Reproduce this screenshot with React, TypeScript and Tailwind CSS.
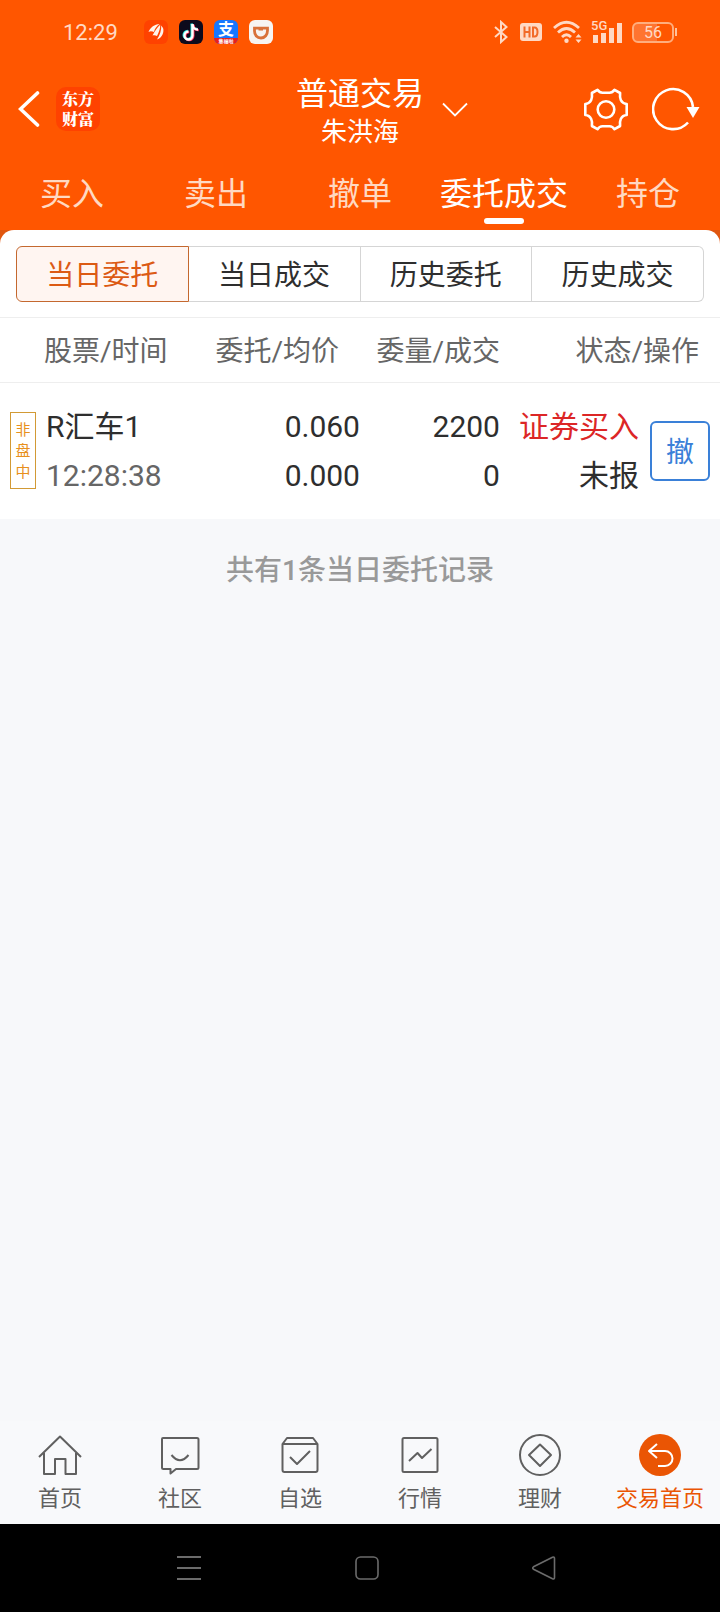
import clsx from "clsx";
import type { ReactNode } from "react";

interface Order {
    tag: string;
    name: string;
    time: string;
    price: string;
    avgPrice: string;
    amount: string;
    dealt: string;
    side: string;
    status: string;
}

const tabs = ["买入", "卖出", "撤单", "委托成交", "持仓"];
const segments = ["当日委托", "当日成交", "历史委托", "历史成交"];

const orders: Order[] = [
    {
        tag: "非盘中",
        name: "R汇车1",
        time: "12:28:38",
        price: "0.060",
        avgPrice: "0.000",
        amount: "2200",
        dealt: "0",
        side: "证券买入",
        status: "未报",
    },
];

const StatusBar = () => (
    <div className="flex h-16 items-center justify-between pl-[63px] pr-[43px] text-[#ffd9c4]">
        <div className="flex items-center">
            <span className="w-[81px] pt-[2px] text-[22px] leading-8">12:29</span>
            <div className="flex gap-[11px]">
                <svg width="24" height="24" viewBox="0 0 24 24">
                    <rect width="24" height="24" rx="6" fill="#ff4200" />
                    <g fill="#fff4ec">
                        <path d="M15.500 4C10.500 4.500 6.500 7 4.500 12C6.500 10.800 8.500 11.500 10 12C10.500 9 12.500 6 15.500 4Z" />
                        <path d="M16.200 4.800C13 7.500 11 11 8.500 15.500C10.500 15 12 15.500 13 16C15 12 16.500 8 16.200 4.800Z" />
                        <path d="M17.200 5.500C17.500 10.500 16 14.500 13 19.500C18 18 20.500 12 19 8Z" />
                    </g>
                </svg>
                <svg width="24" height="24" viewBox="0 0 24 24" fill="none" strokeWidth="2.400">
                    <rect width="24" height="24" rx="6" fill="#0d0a1c" />
                    <g stroke="#25e8e0" transform="translate(-0.800 -0.600)">
                        <path d="M13.500 4V15.500A4 4 0 1 1 9.500 11.500" />
                        <path d="M13.500 4.500C13.800 7.500 16 9.500 19 9.500" />
                    </g>
                    <g stroke="#fe2c55" transform="translate(0.800 0.600)">
                        <path d="M13.500 4V15.500A4 4 0 1 1 9.500 11.500" />
                        <path d="M13.500 4.500C13.800 7.500 16 9.500 19 9.500" />
                    </g>
                    <g stroke="#fff">
                        <path d="M13.500 4V15.500A4 4 0 1 1 9.500 11.500" />
                        <path d="M13.500 4.500C13.800 7.500 16 9.500 19 9.500" />
                    </g>
                </svg>
                <div className="relative h-6 w-6 overflow-hidden rounded-md bg-[#1677ff] text-center text-[16px] leading-5 font-bold text-white">
                    支
                    <div className="absolute inset-x-0 bottom-0 h-[6px] bg-[#e8201c] text-[5px] leading-[6px]">集福啦</div>
                </div>
                <svg width="24" height="24" viewBox="0 0 24 24" fill="none">
                    <rect width="24" height="24" rx="6" fill="#f7f4f2" />
                    <path d="M5.500 8.200H18.500V10.500C18.500 14.500 16 18 12 18S5.500 15 5.500 11Z" stroke="#d9713a" strokeWidth="2.800" />
                    <path d="M9.500 9.500H14" stroke="#d9713a" strokeWidth="2" />
                </svg>
            </div>
        </div>
        <div className="flex items-center">
            <svg width="14" height="24" viewBox="0 0 14 24" fill="none" stroke="currentColor" strokeWidth="2">
                <path d="M1 7L12.500 17L7 22V2L12.500 7L1 17" />
            </svg>
            <svg className="ml-3" width="22" height="20" viewBox="0 0 22 20">
                <rect y="1" width="22" height="18" rx="3" fill="currentColor" />
                <path d="M4.500 4.500V15.500M9.500 4.500V15.500M4.500 10H9.500M13 5.500V14.500H14.500Q17.500 14.500 17.500 10T14.500 5.500Z" fill="none" stroke="#f26a28" strokeWidth="2" />
            </svg>
            <svg className="ml-[11px]" width="29" height="24" viewBox="0 0 29 24" fill="none" stroke="currentColor" strokeWidth="2.800">
                <path d="M1 8Q13.500 -3.500 26 8M5 12.500Q13.500 4.500 22 12.500M9 17Q13.500 12.500 18 17" />
                <circle cx="13.500" cy="20.800" r="2.200" fill="currentColor" stroke="none" />
                <path d="M22.500 17.500L25.500 14L28.500 17.500ZM22.500 19.500H28.500L25.500 23Z" fill="currentColor" stroke="none" />
            </svg>
            <div className="relative ml-[9px] h-6 w-[31px]">
                <span className="absolute -top-1 left-0 text-[13px] leading-5 font-medium">5G</span>
                <svg width="31" height="24" viewBox="0 0 31 24" fill="currentColor">
                    <rect x="2" y="15" width="5" height="8" />
                    <rect x="10" y="13" width="5" height="10" />
                    <rect x="18" y="8" width="5" height="15" />
                    <rect x="26" y="3" width="5" height="20" />
                </svg>
            </div>
            <div className="ml-[10px] flex items-center">
                <div className="h-[21px] w-[42px] rounded-md border-2 border-[#ffae7e] bg-linear-to-r from-[#ff7430] from-60% to-[#ff5600] to-60% text-center text-[16px] leading-[18px]">
                    56
                </div>
                <div className="ml-px h-2 w-0.5 bg-[#ffc09a]" />
            </div>
        </div>
    </div>
);

const TitleBar = () => (
    <div className="grid h-24 grid-cols-[1fr_auto_1fr] items-center">
        <div className="flex items-center pb-[6px] pl-[18px]">
            <button aria-label="返回">
                <svg width="22" height="36" viewBox="0 0 22 36" fill="none" stroke="#fff" strokeWidth="3.600" strokeLinecap="round">
                    <path d="M19.500 2L2.500 18L19.500 34" />
                </svg>
            </button>
            <a href="#" className="ml-4 block w-11 rounded-[10px] bg-[#ff4200] py-[2px] text-center font-['Noto_Serif_CJK_SC','Noto_Sans_CJK_SC',serif] text-[16px] leading-5 font-black text-white">
                东方
                <br />
                财富
            </a>
        </div>
        <button className="relative text-center text-white">
            <span className="block text-[32px] leading-10">普通交易</span>
            <span className="block text-[26px] leading-9">朱洪海</span>
            <svg className="absolute top-7 -right-11" width="26" height="16" viewBox="0 0 26 16" fill="none" stroke="#fff" strokeWidth="1.800">
                <path d="M1 1.500L13 13.500L25 1.500" />
            </svg>
        </button>
        <div className="flex items-center justify-end gap-6 pr-5 pb-[6px]">
            <button aria-label="设置">
                <svg width="44" height="43" viewBox="0 0 44 43" fill="none" stroke="#fff" strokeWidth="2.600" strokeLinejoin="round">
                    <path d="M7.900 5L13.500 1.800Q15.500 4.800 18.500 4.800H25.500Q28.500 4.800 30.500 1.800L36.100 5C35.800 8 35.800 10 36.800 12C38 14.500 40 15.800 42.700 16V27C40 27.200 38 28.500 36.800 31C35.800 33 35.800 35 36.100 38L30.500 41.200Q28.500 38.200 25.500 38.200H18.500Q15.500 38.200 13.500 41.200L7.900 38C8.200 35 8.200 33 7.200 31C6 28.500 4 27.200 1.300 27V16C4 15.800 6 14.500 7.200 12C8.200 10 8.200 8 7.900 5Z" />
                    <circle cx="22" cy="21.500" r="8.300" />
                </svg>
            </button>
            <button aria-label="刷新">
                <svg width="48" height="44" viewBox="0 0 48 44" fill="none">
                    <path d="M36 35.500A20 20 0 1 1 41 20" stroke="#fff" strokeWidth="2.600" />
                    <path d="M34.500 20H47.500L41 31Z" fill="#fff" />
                </svg>
            </button>
        </div>
    </div>
);

const Segments = () => (
    <div className="flex px-4 pt-4 pb-[15px]">
        {segments.map((label, i) => (
            <button
                key={label}
                className={clsx(
                    "h-14 flex-1 border pt-1 text-[28px] leading-10 first:rounded-l-md last:rounded-r-md",
                    i === 0 ? "border-[#c4682f] bg-[#fff5f1] text-[#dc5a14]" : "border-l-0 border-[#d5d5d5] text-[#2e2e2e]",
                )}
            >
                {label}
            </button>
        ))}
    </div>
);

const OrderTable = () => (
    <table className="w-full table-fixed text-right">
        <thead className="border-y border-[#eeeeee] text-[28px] leading-10 text-[#666666]">
            <tr className="h-[65px]">
                <th className="w-5/18 pt-1 pl-11 text-left font-normal">股票/时间</th>
                <th className="w-2/9 pt-1 pr-[21px] font-normal">委托/均价</th>
                <th className="w-7/36 pt-1 font-normal">委量/成交</th>
                <th className="pt-1 pr-[21px] font-normal">状态/操作</th>
            </tr>
        </thead>
        <tbody className="text-[30px] leading-[49px] text-[#2e2e2e]">
            {orders.map((order) => (
                <tr key={order.time} className="h-[136px]">
                    <td className="text-left">
                        <div className="flex items-center pl-[10px]">
                            <span className="mr-[10px] w-[26px] border border-[#d29a35] px-1 pt-[7px] pb-[5px] text-center text-[15px] leading-[21px] break-all text-[#e8901c]">
                                {order.tag}
                            </span>
                            <div>
                                <div>{order.name}</div>
                                <div className="text-[#666666]">{order.time}</div>
                            </div>
                        </div>
                    </td>
                    <td>
                        <div>{order.price}</div>
                        <div>{order.avgPrice}</div>
                    </td>
                    <td>
                        <div>{order.amount}</div>
                        <div>{order.dealt}</div>
                    </td>
                    <td>
                        <div className="flex items-center justify-end gap-[11px] pr-[10px]">
                            <div>
                                <div className="text-[#dc2626]">{order.side}</div>
                                <div>{order.status}</div>
                            </div>
                            <button className="h-15 w-15 rounded-md border-2 border-[#3a80d8] pt-1 text-[28px] leading-10 text-[#3a80d8]">
                                撤
                            </button>
                        </div>
                    </td>
                </tr>
            ))}
        </tbody>
    </table>
);

const navItems: { label: string; icon: ReactNode }[] = [
    {
        label: "首页",
        icon: <path d="M1 23L22 2.500L43 23M6 19V40H17V25H27.500V40H38V19" />,
    },
    {
        label: "社区",
        icon: (
            <>
                <path d="M5 4H39Q40.500 4 40.500 5.500V33.500Q40.500 35 39 35H18L12.500 39.500V35H5.500Q4 35 4 33.500V5Q4 4 5 4Z" />
                <path d="M13.500 21Q22 31.500 30.500 21" />
            </>
        ),
    },
    {
        label: "自选",
        icon: (
            <>
                <path d="M4.500 10L9 4H35L39.500 10V36Q39.500 38 37.500 38H6.500Q4.500 38 4.500 36ZM4.500 10H39.500" />
                <path d="M12 23L19 30L32 17" />
            </>
        ),
    },
    {
        label: "行情",
        icon: (
            <>
                <rect x="4.500" y="4" width="35" height="34" rx="1.500" />
                <path d="M11 27L19.500 19L24 24L33.500 15" />
            </>
        ),
    },
    {
        label: "理财",
        icon: (
            <>
                <circle cx="22" cy="21" r="20" />
                <path d="M22 10.500L33 21L22 32L11 21Z" />
            </>
        ),
    },
    {
        label: "交易首页",
        icon: (
            <>
                <circle cx="22" cy="21" r="21" fill="#ea5504" stroke="none" />
                <path d="M19 10L11 17L19 24M11 17H27A7.500 7.500 0 0 1 27 32H20" stroke="#fff" />
            </>
        ),
    },
];

const BottomNav = () => (
    <nav className="grid grid-cols-6 bg-[#f8f9fb] pt-[13px] pb-[9px]">
        {navItems.map(({ label, icon }) => (
            <a
                key={label}
                href="#"
                className={clsx(
                    "flex flex-col items-center text-[22px] leading-8",
                    label === "交易首页" ? "text-[#ea5504]" : "text-[#606060]",
                )}
            >
                <svg className="mb-[6px]" width="44" height="43" viewBox="0 0 44 43" fill="none" stroke="currentColor" strokeWidth="2" strokeLinejoin="round">
                    {icon}
                </svg>
                {label}
            </a>
        ))}
    </nav>
);

const SystemNav = () => (
    <div className="flex h-22 items-center justify-between bg-black pr-[164px] pl-[177px]">
        <button aria-label="最近任务">
            <svg width="24" height="24" viewBox="0 0 24 24" stroke="#6b6b6b" strokeWidth="2">
                <path d="M0 1H24M0 12H24M0 23H24" />
            </svg>
        </button>
        <button aria-label="主屏幕">
            <svg width="24" height="24" viewBox="0 0 24 24" fill="none" stroke="#6b6b6b" strokeWidth="1.600">
                <rect x="1" y="1" width="22" height="22" rx="4.500" />
            </svg>
        </button>
        <button aria-label="返回上级">
            <svg width="24" height="24" viewBox="0 0 24 24" fill="none" stroke="#6b6b6b" strokeWidth="1.600" strokeLinejoin="round">
                <path d="M1.500 10.800L20.500 1.200Q22.500 0.600 22.500 2.500V21.500Q22.500 23.400 20.500 22.800L1.500 13.200Q0 12 1.500 10.800Z" />
            </svg>
        </button>
    </div>
);

const App = () => {
    return (
        <div className="flex min-h-screen flex-col bg-[#f7f8fa] font-[Roboto,'Noto_Sans_CJK_SC',sans-serif]">
            <header className="bg-[#ff5600]">
                <StatusBar />
                <TitleBar />
                <nav className="grid h-[70px] grid-cols-5 text-center text-[32px] leading-[46px] text-[#ffd9c2]">
                    {tabs.map((tab) => (
                        <a key={tab} href="#" className={clsx("flex flex-col items-center pt-[11px]", tab === "委托成交" && "text-white")}>
                            {tab}
                            {tab === "委托成交" && <span className="mt-px h-[6px] w-10 rounded-full bg-white" />}
                        </a>
                    ))}
                </nav>
            </header>
            <main className="flex-1">
                <div className="bg-[#e0560f]">
                    <section className="rounded-t-[14px] bg-white">
                        <Segments />
                        <OrderTable />
                    </section>
                </div>
                <p className="pt-8 text-center text-[28px] leading-10 font-medium text-[#999999]">共有1条当日委托记录</p>
            </main>
            <BottomNav />
            <SystemNav />
        </div>
    );
};

export default App;
